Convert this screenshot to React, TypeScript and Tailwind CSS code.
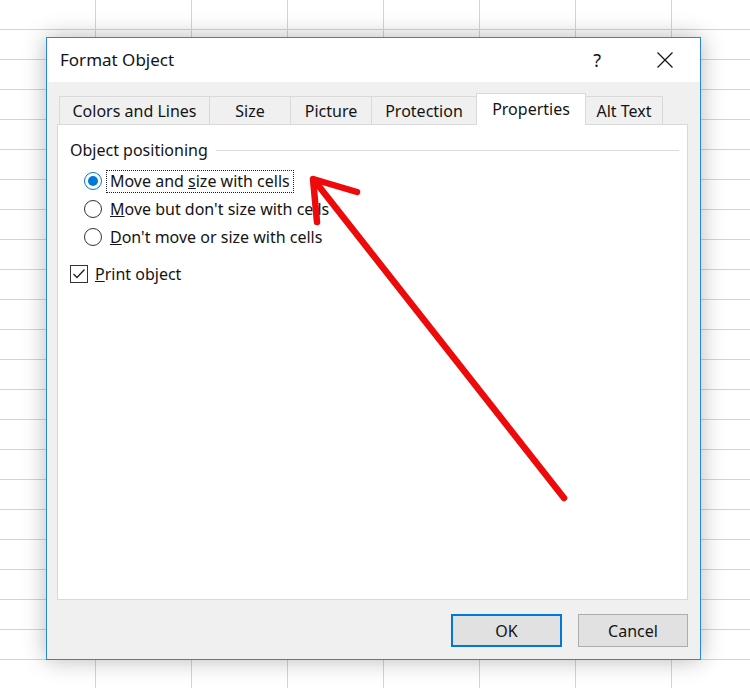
import type { ReactNode } from "react";

const tabs = [
  { label: "Colors and Lines", w: "w-[151px]" },
  { label: "Size", w: "w-[82px]" },
  { label: "Picture", w: "w-[82px]" },
  { label: "Protection", w: "w-[106px]" },
  { label: "Properties", w: "w-[110px]", active: true },
  { label: "Alt Text", w: "w-[78px]" },
];

function Radio({ checked, children, focused }: { checked?: boolean; children: ReactNode; focused?: boolean }) {
  return (
    <div className="flex items-center h-[28px] pl-[26px]">
      <span
        className={
          checked
            ? "w-[18px] h-[18px] rounded-full border border-[#0078d7] bg-white flex items-center justify-center"
            : "w-[18px] h-[18px] rounded-full border border-[#333333] bg-white"
        }
      >
        {checked && <span className="w-[10px] h-[10px] rounded-full bg-[#0078d7]" />}
      </span>
      <span
        className={
          focused
            ? "ml-[4px] px-[3px] border border-dotted border-[#222] leading-[21px]"
            : "ml-[4px] px-[3px] border border-transparent leading-[21px]"
        }
      >
        {children}
      </span>
    </div>
  );
}

export default function App() {
  // background worksheet cells
  const cells = Array.from({ length: 8 * 23 });

  return (
    <div className="relative w-[750px] h-[688px] overflow-hidden bg-white font-['Noto_Sans',sans-serif] text-[#141414]">
      <div className="grid grid-cols-[repeat(8,96px)]">
        {cells.map((_, i) => (
          <div key={i} className="h-[30px] border-r border-b border-[#d4d4d4]" />
        ))}
      </div>

      {/* dialog */}
      <div className="absolute left-[46px] top-[37px] w-[655px] h-[623px] border border-[#2a86d8] bg-[#f0f0f0] shadow-[0_0_22px_rgba(0,0,0,0.28)] flex flex-col">
        <div className="h-[44px] bg-white flex items-center pl-[13px] shrink-0">
          <span className="text-[17px]">Format Object</span>
          <span className="ml-auto text-[18px] mr-[56px]">?</span>
          <svg width="16" height="16" viewBox="0 0 16 16" className="mr-[27px]">
            <path d="M0.5 0.5 L15.5 15.5 M15.5 0.5 L0.5 15.5" stroke="#111" strokeWidth="1.2" />
          </svg>
        </div>

        <div className="flex-1 flex flex-col pl-[10px] pr-[12px] pt-[11px]">
          <div className="flex items-end h-[32px] pl-[2px] -mb-px relative z-10">
            {tabs.map((t, i) =>
              t.active ? (
                <div
                  key={t.label}
                  className={`${t.w} h-[32px] -ml-px bg-white border border-b-0 border-[#d9d9d9] flex items-center justify-center text-[16px] pb-[2px]`}
                >
                  {t.label}
                </div>
              ) : (
                <div
                  key={t.label}
                  className={`${t.w} h-[29px] ${i > 0 ? "-ml-px" : ""} bg-[#f0f0f0] border border-[#d9d9d9] flex items-center justify-center text-[16px]`}
                >
                  {t.label}
                </div>
              )
            )}
          </div>

          <div className="h-[476px] bg-white border border-[#d9d9d9] text-[16px] pt-[14px]">
            <div className="flex items-center pl-[12px] pr-[8px] h-[22px]">
              <span>Object positioning</span>
              <span className="flex-1 h-px bg-[#dcdcdc] ml-[8px]" />
            </div>
            <div className="mt-[6px]">
              <Radio checked focused>
                Move and <span className="underline">s</span>ize with cells
              </Radio>
              <Radio>
                <span className="underline">M</span>ove but don't size with cells
              </Radio>
              <Radio>
                <span className="underline">D</span>on't move or size with cells
              </Radio>
            </div>
            <div className="flex items-center h-[28px] mt-[9px] pl-[12px]">
              <span className="w-[18px] h-[18px] border border-[#333333] bg-white flex items-center justify-center">
                <svg width="14" height="14" viewBox="0 0 14 14">
                  <path d="M1.5 7 L5 10.5 L12.5 2.5" fill="none" stroke="#222" strokeWidth="1.3" />
                </svg>
              </span>
              <span className="ml-[7px]">
                <span className="underline">P</span>rint object
              </span>
            </div>
          </div>

          <div className="flex justify-end gap-[16px] mt-[14px] text-[16px]">
            <button className="w-[111px] h-[33px] border-2 border-[#0078d7] bg-[#e1e1e1]">OK</button>
            <button className="w-[110px] h-[33px] border border-[#adadad] bg-[#e1e1e1]">Cancel</button>
          </div>
        </div>
      </div>

      {/* red annotation arrow */}
      <svg className="absolute left-0 top-0 pointer-events-none" width="750" height="688" viewBox="0 0 750 688">
        <g stroke="#ee0a0a" strokeWidth="6.5" strokeLinecap="round" strokeLinejoin="round" fill="none">
          <path d="M564 498 L314 180" />
          <path d="M357 192 L313 179 L317 222" />
        </g>
      </svg>
    </div>
  );
}
